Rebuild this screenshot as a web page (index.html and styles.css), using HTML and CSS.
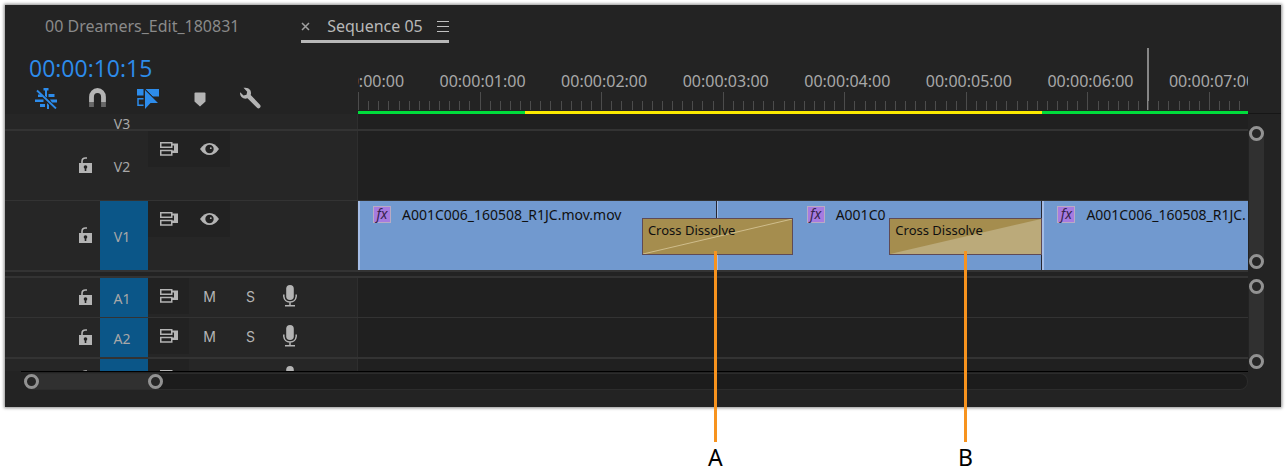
FILE: index.html
```
<!DOCTYPE html>
<html lang="en">
<head>
  <meta charset="UTF-8" />
  <meta name="viewport" content="width=device-width, initial-scale=1.0" />
  <title>Sequence 05</title>
  <link rel="stylesheet" href="styles.css">
</head>
<body>
  <!-- shared icons -->
  <svg class="sprite" width="0" height="0">
    <symbol id="lock" viewBox="0 0 13 16">
      <path d="M0 6h13v10H0z" fill="#b4b4b4"/>
      <path d="M3 7V4.5Q3 1 6.500 1h1.500" fill="none" stroke="#b4b4b4" stroke-width="1.600"/>
      <circle cx="6.500" cy="10" r="1.800" fill="#222"/>
      <path d="M5.700 10h1.600v4H5.700z" fill="#222"/>
    </symbol>
    <symbol id="sync" viewBox="0 0 18 14">
      <path d="M.75.75h11v4.500h-11zM.75 8.500h11v4.500h-11z" fill="none" stroke="#b4b4b4" stroke-width="1.500"/>
      <path d="M11 1.500h7V11h-7V8.500h3v-5h-3z" fill="#b4b4b4"/>
    </symbol>
    <symbol id="eye" viewBox="0 0 19 12">
      <path d="M0 6Q4 0 9.500 0T19 6Q15 12 9.500 12T0 6z" fill="#b4b4b4"/>
      <circle cx="9.500" cy="6" r="4.200" fill="#222"/>
      <circle cx="10.800" cy="5.200" r=".9" fill="#b4b4b4"/>
    </symbol>
    <symbol id="mic" viewBox="0 0 14 22">
      <rect x="3.200" y="0" width="7.600" height="15" rx="3.800" fill="#b4b4b4"/>
      <path d="M.8 9.500v2Q1.500 17 7 17t6.200-5.500v-2M7 17v3.500M2 20.800h10" fill="none" stroke="#b4b4b4" stroke-width="1.500"/>
    </symbol>
  </svg>

  <main class="panel">
    <nav class="tabs">
      <button class="tab">00 Dreamers_Edit_180831</button>
      <div class="tab-active">
        <button class="icon-btn" aria-label="Close sequence">
          <svg width="9" height="9" viewBox="0 0 9 9"><path d="M1 1l7 7M8 1L1 8" stroke="#a0a0a0" stroke-width="1.500"/></svg>
        </button>
        <button class="tab tab-current">Sequence 05</button>
        <button class="icon-btn" aria-label="Panel menu">
          <svg width="12" height="11" viewBox="0 0 12 11"><path d="M0 .5h12M0 5.500h12M0 10.500h12" stroke="#c0c0c0" stroke-width="1"/></svg>
        </button>
      </div>
    </nav>

    <header class="head">
      <div class="controls">
        <div class="timecode">00:00:10:15</div>
        <div class="tools">
          <button class="icon-btn" aria-label="Insert sequence as nest">
            <svg width="22" height="22" viewBox="0 0 22 22">
              <path d="M8.500 1h5v2.500h-1.500v7L10 9V3.500H8.500zM13.500 7h6v3h-6zM15 12.500h7v3h-5zM0 12.500h8.500v2.500H0zM5 17h5v3H5zM12 16l2 2v4h-2zM3 7.500h3l2 2.500H3z" fill="#2d8ceb"/>
              <path d="M2 3.500L21 21.500" stroke="#2d8ceb" stroke-width="1.800"/>
            </svg>
          </button>
          <button class="icon-btn" aria-label="Snap">
            <svg width="22" height="22" viewBox="0 0 22 22">
              <path d="M5.500 15V10a6 6.500 0 0 1 12 0v5" fill="none" stroke="#b4b4b4" stroke-width="4.800"/>
              <path d="M3.100 15h4.800v5H3.100zM15.100 15h4.800v5h-4.800z" fill="#686868"/>
            </svg>
          </button>
          <button class="icon-btn" aria-label="Linked selection">
            <svg width="22" height="22" viewBox="0 0 22 22">
              <path d="M0 2h6.500v6.500H0zM8.500 2H22v7.500h-6.500z" fill="#2d8ceb"/>
              <path d="M6.500 11.700H1v6.500h5.500" fill="none" stroke="#2d8ceb" stroke-width="1.500"/>
              <path d="M8 3l13 13h-7.500L8 22z" fill="#2d8ceb"/>
              <path d="M8.500 2.500l9 9" stroke="#232323" stroke-width=".8"/>
            </svg>
          </button>
          <button class="icon-btn" aria-label="Add marker">
            <svg width="22" height="22" viewBox="0 0 22 22"><path d="M7.500 5.500h9q1 0 1 1v8L12 19.500l-5.500-5v-8q0-1 1-1z" fill="#b4b4b4"/></svg>
          </button>
          <button class="icon-btn" aria-label="Timeline display settings">
            <svg width="22" height="22" viewBox="0 0 22 22">
              <path d="M4.500.8Q9 0 11.200 3q1.300 2.500.5 5l9.500 10q1 1.500-.3 2.700t-2.600.3L8.500 11.300Q5 12.500 2.500 10 .5 8 1.200 5.200L4.500 8.500l3-.8.700-3z" fill="#b4b4b4"/>
            </svg>
          </button>
        </div>
      </div>

      <div class="ruler" id="ruler">
        <div class="playhead"></div>
        <div class="render-bar">
          <span class="render-green start"></span>
          <span class="render-yellow"></span>
          <span class="render-green end"></span>
        </div>
      </div>
      <div class="corner"></div>
    </header>

    <section class="group video">
      <div class="tracks">
        <div class="track v3">
          <div class="track-head">
            <span class="lock"></span>
            <span class="label">V3</span>
          </div>
          <div class="lane"></div>
        </div>

        <div class="track v2">
          <div class="track-head">
            <button class="lock" aria-label="Lock V2"><svg width="13" height="16"><use href="#lock"/></svg></button>
            <span class="label">V2</span>
            <div class="switches">
              <button class="switch dark" aria-label="Sync lock V2"><svg width="18" height="14"><use href="#sync"/></svg></button>
              <button class="switch dark" aria-label="Show V2"><svg width="19" height="12"><use href="#eye"/></svg></button>
            </div>
          </div>
          <div class="lane"></div>
        </div>

        <div class="track v1">
          <div class="track-head">
            <button class="lock" aria-label="Lock V1"><svg width="13" height="16"><use href="#lock"/></svg></button>
            <span class="label target">V1</span>
            <div class="switches">
              <button class="switch dark" aria-label="Sync lock V1"><svg width="18" height="14"><use href="#sync"/></svg></button>
              <button class="switch dark" aria-label="Show V1"><svg width="19" height="12"><use href="#eye"/></svg></button>
            </div>
          </div>
          <div class="lane clips">
            <div class="clip first"><span class="fx">fx</span><span class="name">A001C006_160508_R1JC.mov.mov</span></div>
            <div class="clip second"><span class="fx">fx</span><span class="name">A001C0</span></div>
            <div class="clip third"><span class="fx">fx</span><span class="name">A001C006_160508_R1JC.</span></div>

            <div class="dissolve center-cut">
              <svg width="100%" height="100%" viewBox="0 0 100 100" preserveAspectRatio="none"><path d="M0 100L100 0" stroke="#cfbd8c" vector-effect="non-scaling-stroke"/></svg>
              <span>Cross Dissolve</span>
            </div>
            <div class="dissolve end-cut">
              <svg width="100%" height="100%" viewBox="0 0 100 100" preserveAspectRatio="none"><path d="M0 100L100 0V100z" fill="#bbaa7a"/></svg>
              <span>Cross Dissolve</span>
            </div>

            <div class="callout a">A</div>
            <div class="callout b">B</div>
          </div>
        </div>
      </div>
      <div class="vscroll"><div class="vthumb"><i class="knob"></i><i class="knob"></i></div></div>
    </section>

    <section class="group audio">
      <div class="tracks">
        <div class="track a1">
          <div class="track-head">
            <button class="lock" aria-label="Lock A1"><svg width="13" height="16"><use href="#lock"/></svg></button>
            <span class="label target">A1</span>
            <div class="switches">
              <button class="switch dark" aria-label="Sync lock A1"><svg width="18" height="14"><use href="#sync"/></svg></button>
              <button class="switch" aria-label="Mute A1">M</button>
              <button class="switch" aria-label="Solo A1">S</button>
              <button class="switch record" aria-label="Record A1"><svg width="14" height="22"><use href="#mic"/></svg></button>
            </div>
          </div>
          <div class="lane"></div>
        </div>

        <div class="track a2">
          <div class="track-head">
            <button class="lock" aria-label="Lock A2"><svg width="13" height="16"><use href="#lock"/></svg></button>
            <span class="label target">A2</span>
            <div class="switches">
              <button class="switch dark" aria-label="Sync lock A2"><svg width="18" height="14"><use href="#sync"/></svg></button>
              <button class="switch" aria-label="Mute A2">M</button>
              <button class="switch" aria-label="Solo A2">S</button>
              <button class="switch record" aria-label="Record A2"><svg width="14" height="22"><use href="#mic"/></svg></button>
            </div>
          </div>
          <div class="lane"></div>
        </div>

        <!-- only the top of this track is in view -->
        <div class="track a3">
          <div class="track-head">
            <button class="lock" aria-label="Lock A3"><svg width="13" height="16"><use href="#lock"/></svg></button>
            <span class="label target"></span>
            <div class="switches">
              <button class="switch dark" aria-label="Sync lock A3"><svg width="18" height="14"><use href="#sync"/></svg></button>
              <span class="switch"></span>
              <span class="switch"></span>
              <button class="switch record" aria-label="Record A3"><svg width="14" height="22"><use href="#mic"/></svg></button>
            </div>
          </div>
          <div class="lane"></div>
        </div>
      </div>
      <div class="vscroll"><div class="vthumb"><i class="knob"></i><i class="knob"></i></div></div>
    </section>

    <footer class="foot">
      <div class="hscroll"><div class="hthumb"><i class="knob"></i><i class="knob"></i></div></div>
    </footer>
  </main>

  <script>
    const ruler = document.getElementById('ruler');
    const second = 13.66; // one second, in percent of the ruler
    const frames = 12;

    for (let i = 0; i < 88; i++) {
      const tick = document.createElement('i');
      tick.className = i % frames === 0 ? 'tick major' : 'tick';
      tick.style.left = (i * second / frames) + '%';
      ruler.appendChild(tick);
    }

    for (let s = 0; s < 8; s++) {
      const time = document.createElement('span');
      time.className = 'time';
      time.textContent = `00:00:0${s}:00`;
      time.style.left = (s * second) + '%';
      ruler.appendChild(time);
    }
  </script>
</body>
</html>
```

FILE: styles.css
```
* {
  box-sizing: border-box;
}
body {
  margin: 0;
  padding: 5px 5px 66px;
  background: #fff;
  font-family: "Noto Sans", "Open Sans", sans-serif;
  font-size: 16px;
  color: #a8a8a8;
}
button {
  margin: 0;
  padding: 0;
  border: 0;
  background: none;
  font: inherit;
  color: inherit;
}
svg {
  display: block;
}
.sprite {
  position: absolute;
}
.panel {
  background: #232323;
  box-shadow: 0 0 3px 1px rgba(0, 0, 0, 0.45);
}

/* tabs */
.tabs {
  display: flex;
  gap: 62px;
  height: 39px;
  padding-left: 40px;
}
.tab {
  height: 35px;
  padding-bottom: 2px;
  padding-top: 8px;
  line-height: 24px;
  color: #8a8a8a;
  white-space: nowrap;
}
.tab-active {
  display: flex;
  width: 148px;
  height: 38px;
  justify-content: space-between;
  border-bottom: 3px solid #b8b8b8;
}
.tab-active .icon-btn {
  padding-top: 8px;
}
.tab-current {
  padding-left: 2px;
  color: #b8b8b8;
}
.icon-btn {
  display: flex;
  align-items: center;
  justify-content: center;
}

/* timecode, tools and ruler */
.head {
  display: grid;
  grid-template-columns: 353px 1fr 33px;
  height: 70px;
}
.controls {
  padding-top: 6px;
  padding-left: 24px;
}
.timecode {
  font-family: "Open Sans", "Noto Sans", sans-serif;
  font-size: 23px;
  font-weight: 500;
  line-height: 36px;
  color: #2d8ceb;
}
.tools {
  display: flex;
  gap: 29px;
  height: 24px;
  padding-left: 6px;
}
.ruler {
  position: relative;
  display: flex;
  flex-direction: column;
  justify-content: flex-end;
  overflow: hidden;
}
.time {
  position: absolute;
  top: 25px;
  padding-left: 6px;
  line-height: 24px;
  transform: translateX(-50%);
}
.tick {
  position: absolute;
  bottom: 4px;
  width: 1px;
  height: 9px;
  background: #4c4c4c;
}
.tick.major {
  height: 18px;
}
.playhead {
  position: absolute;
  top: 4px;
  bottom: 4px;
  left: 88.7%;
  width: 2px;
  background: #868686;
}
.render-bar {
  display: flex;
  height: 3px;
}
.render-green {
  background: #00dd3c;
}
.render-yellow {
  flex: 517;
  background: #fbea00;
}
.start {
  flex: 167;
}
.end {
  flex: 206;
}
.corner {
  border-bottom: 1px solid #161616;
}

/* tracks */
.group {
  display: grid;
  grid-template-columns: 1fr 33px;
}
.track {
  display: grid;
  grid-template-columns: 353px 1fr;
  border-bottom: 1px solid #333;
}
.track-head {
  display: grid;
  grid-template-columns: 95px 48px 1fr;
  background: #262626;
  border-right: 1px solid #2e2e2e;
}
.lane {
  background: #202020;
}
.v3 {
  height: 17px;
  overflow: hidden;
  border-bottom-width: 2px;
}
.v2 {
  height: 70px;
}
.v1 {
  height: 71px;
  border-bottom-width: 2px;
}
.audio {
  margin-top: 4px;
}
.audio .tracks {
  border-top: 2px solid #333;
}
.a1 {
  height: 40px;
}
.a2 {
  height: 41px;
  border-bottom-width: 2px;
}
.a3 {
  height: 12px;
  overflow: hidden;
  border-bottom: 0;
}
.a3 .track-head {
  height: 39px;
}
.lock {
  display: flex;
  align-items: center;
  justify-content: flex-end;
  padding: 0 8px 2px 0;
}
.label {
  display: flex;
  align-items: center;
  justify-content: center;
  padding: 2px 4px 0 0;
  font-size: 14px;
  line-height: 20px;
}
.v3 .label {
  height: 20px;
  padding-top: 0;
}
.target {
  background: #0b5688;
}
.switches {
  display: flex;
  height: 36px;
}
.switch {
  display: flex;
  align-items: center;
  justify-content: center;
  width: 41px;
  font-family: Inter, sans-serif;
  font-size: 14px;
  color: #b4b4b4;
}
.record {
  width: 38px;
}
.dark {
  background: #222;
}

/* clips */
.clips {
  position: relative;
  display: flex;
}
.clip {
  display: flex;
  flex: 0 1 auto;
  align-items: flex-start;
  gap: 11px;
  min-width: 0;
  padding: 5px 0 0 13px;
  overflow: hidden;
  background: #7199cf;
  border-left: 2px solid #a5bde6;
  border-right: 1px solid #262630;
}
.first {
  width: 40.300%;
}
.second {
  width: 36.600%;
  padding-left: 10%;
  border-left-width: 1px;
}
.third {
  width: 23.100%;
  border-right: 0;
}
.fx {
  flex: none;
  width: 18px;
  height: 17px;
  border: 1px solid #b9aac4;
  background: #a67be0;
  font-size: 14px;
  font-style: italic;
  line-height: 14px;
  text-align: center;
  color: #35234e;
}
.name {
  font-size: 14px;
  line-height: 18px;
  color: #101010;
  white-space: nowrap;
}
.dissolve {
  position: absolute;
  top: 17px;
  height: 37px;
  border: 1px solid #5f4a55;
  background: #a58d4e;
}
.dissolve span {
  position: absolute;
  top: 2px;
  left: 5px;
  font-size: 13px;
  line-height: 18px;
  color: #101010;
  white-space: nowrap;
}
.center-cut {
  left: 31.900%;
  width: 17%;
}
.end-cut {
  left: 59.700%;
  width: 17.200%;
}

/* callouts hang from the transitions to below the panel */
.callout {
  position: absolute;
  top: 50px;
  z-index: 2;
  width: 31px;
  margin-left: -15px;
  font-size: 23px;
  line-height: 30px;
  text-align: center;
  color: #000;
}
.callout::before {
  content: "";
  display: block;
  width: 3px;
  height: 191px;
  margin: 0 auto;
  background: #f7931e;
}
.a {
  left: 40.100%;
}
.b {
  left: 68.200%;
}

/* scroll bars */
.knob {
  width: 15px;
  height: 15px;
  border: 3px solid #929292;
  border-radius: 50%;
  background: #262626;
}
.vscroll {
  display: flex;
  padding-left: 1px;
}
.video .vscroll {
  padding-top: 12px;
  padding-bottom: 3px;
}
.audio .vscroll {
  padding-top: 3px;
  padding-bottom: 2px;
}
.vthumb {
  display: flex;
  flex-direction: column;
  justify-content: space-between;
  background: #303030;
  border-radius: 8px;
}
.foot {
  margin: 0 33px 0 16px;
  padding: 1px 0 17px 3px;
  border-top: 1px solid #000;
}
.hscroll {
  height: 17px;
  background: #1c1c1c;
  border: 1px solid #2c2c2c;
  border-left: 0;
  border-radius: 8px;
}
.hthumb {
  display: flex;
  justify-content: space-between;
  width: 11.400%;
  background: #303030;
  border-radius: 8px;
}
```
